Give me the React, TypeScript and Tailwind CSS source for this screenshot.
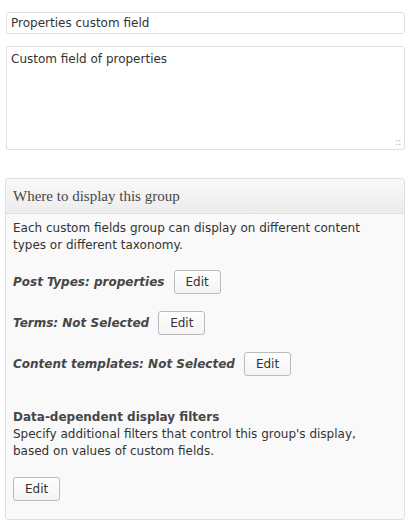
import React from 'react';

const sans = { fontFamily: '"DejaVu Sans", Verdana, sans-serif' };

function EditButton() {
  return (
    <button
      type="button"
      className="h-[24px] px-[11px] rounded-[3px] border border-[#bbbbbb] bg-gradient-to-b from-[#fefefe] to-[#f4f4f4] text-[12px] leading-[22px] text-[#333333]"
      style={sans}
    >
      Edit
    </button>
  );
}

function Row({ label }: { label: string }) {
  return (
    <div className="flex items-center gap-[9px]">
      <span className="text-[12px] font-bold italic text-[#464646]">{label}</span>
      <EditButton />
    </div>
  );
}

export default function App() {
  return (
    <div className="w-[420px] h-[523px] bg-white text-[#333333]" style={sans}>
      <div className="pt-[12px] pl-[6px] w-[405px]">
        <input
          defaultValue="Properties custom field"
          className="block w-full h-[22px] px-[4px] rounded-[3px] border border-[#dfdfdf] bg-white text-[12px] text-[#333333] outline-none"
          style={sans}
        />
        <div className="relative mt-[12px]">
          <textarea
            defaultValue="Custom field of properties"
            className="block w-full h-[104px] px-[4px] pt-[4px] rounded-[3px] border border-[#dfdfdf] bg-white text-[12px] leading-[17px] text-[#333333] outline-none resize-none"
            style={sans}
          />
          <span className="absolute right-[4px] bottom-[3px] text-[8px] leading-none text-[#999999]">::</span>
        </div>
      </div>
      <div className="mt-[28px] ml-[5px] w-[400px] h-[342px] rounded-[3px] border border-[#dfdfdf] bg-[#f9f9f9]">
        <div className="h-[35px] flex items-center px-[7px] border-b border-[#dfdfdf] bg-gradient-to-b from-[#f9f9f9] to-[#ececec] rounded-t-[3px]">
          <h3 className="text-[15px] text-[#464646]" style={{ fontFamily: '"Liberation Serif", Georgia, serif' }}>
            Where to display this group
          </h3>
        </div>
        <div className="px-[7px] pt-[6px] text-[12px] leading-[17px]">
          <p className="w-[365px]">Each custom fields group can display on different content types or different taxonomy.</p>
          <div className="mt-[16px] flex flex-col gap-[17px]">
            <Row label="Post Types: properties" />
            <Row label="Terms: Not Selected" />
            <Row label="Content templates: Not Selected" />
          </div>
          <div className="mt-[33px]">
            <p className="font-bold text-[#464646]">Data-dependent display filters</p>
            <p className="w-[365px]">Specify additional filters that control this group's display, based on values of custom fields.</p>
          </div>
          <div className="mt-[17px]">
            <EditButton />
          </div>
        </div>
      </div>
    </div>
  );
}
